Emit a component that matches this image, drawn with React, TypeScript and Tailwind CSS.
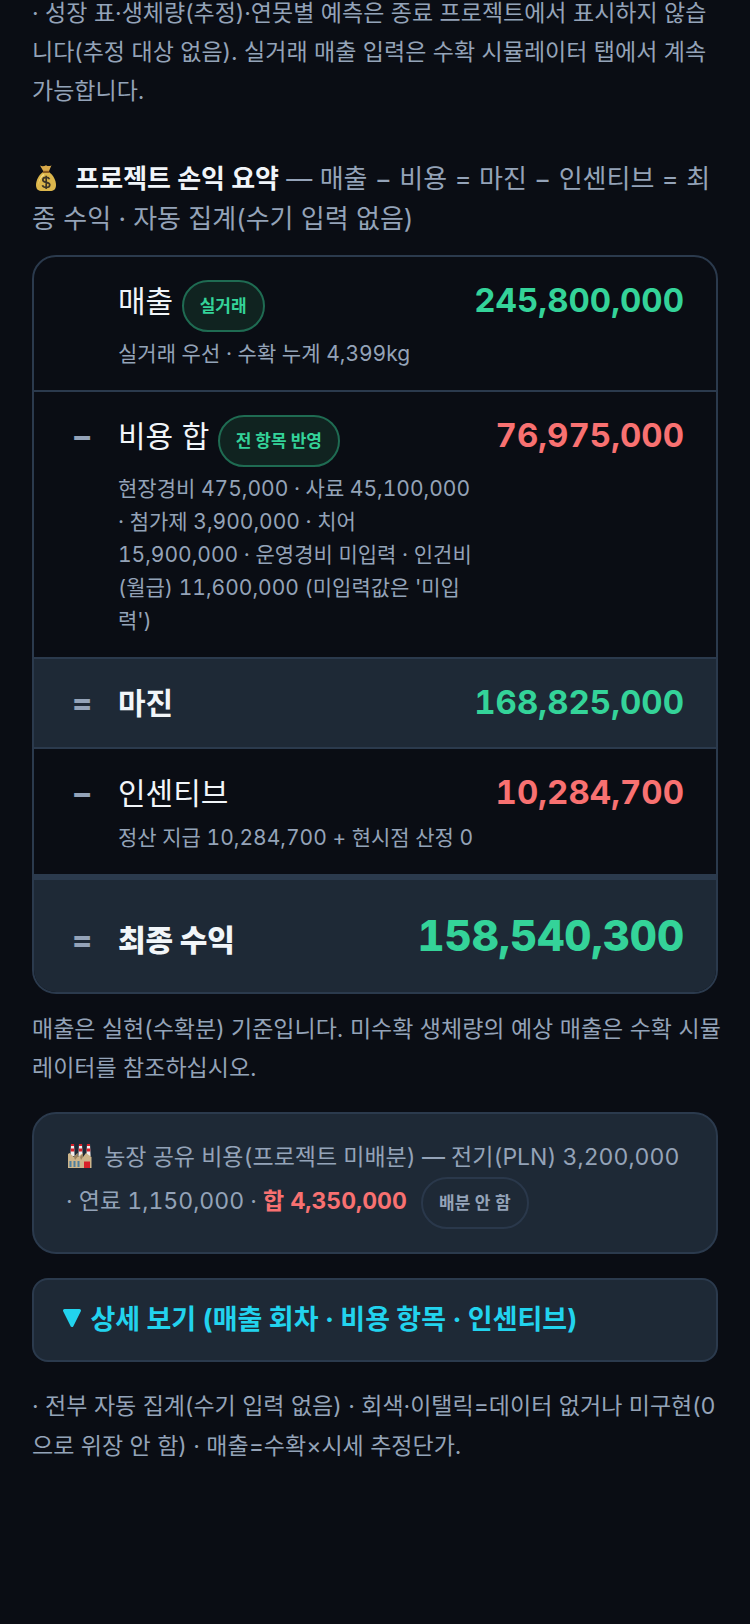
import type { ReactNode } from 'react'
import clsx from 'clsx'

type RowProps = {
  op?: string
  label: string
  badge?: string
  note?: string
  value: string
  tone: 'gain' | 'cost'
  kind?: 'item' | 'subtotal' | 'total'
}

const rows: RowProps[] = [
  {
    label: '매출',
    badge: '실거래',
    note: '실거래 우선 · 수확 누계 4,399kg',
    value: '245,800,000',
    tone: 'gain'
  },
  {
    op: '−',
    label: '비용 합',
    badge: '전 항목 반영',
    note: "현장경비 475,000 · 사료 45,100,000 · 첨가제 3,900,000 · 치어 15,900,000 · 운영경비 미입력 · 인건비(월급) 11,600,000 (미입력값은 '미입력')",
    value: '76,975,000',
    tone: 'cost'
  },
  { op: '=', label: '마진', value: '168,825,000', tone: 'gain', kind: 'subtotal' },
  {
    op: '−',
    label: '인센티브',
    note: '정산 지급 10,284,700 + 현시점 산정 0',
    value: '10,284,700',
    tone: 'cost'
  },
  { op: '=', label: '최종 수익', value: '158,540,300', tone: 'gain', kind: 'total' }
]

const MoneyBag = () => (
  <svg viewBox="0 0 28 28" className="mr-2 inline-block size-7 align-[-4px]" aria-hidden="true">
    <path d="M8 1.5 Q11 3 14 1.2 Q17 3 19.5 1.2 L16.8 7.5 H11.5 Z" fill="#d9a94a" />
    <path d="M11 8 C7 11 4 16 4 21 C4 25.5 6.5 27 10 27 H18 C21.5 27 24 25.5 24 21 C24 16 21 11 17 8 Z" fill="#dcb64c" />
    <path d="M11.2 10 C8 13 6.2 17 6.5 21 C7 16.5 9 13 12.5 11 Z" fill="#f6e08a" />
    <path d="M11 6.8 H17.2 V9 H11 Z" fill="#8a5a20" />
    <path
      d="M17.5 15.2 C17 13.9 15.7 13.4 14.2 13.4 C12.2 13.4 10.8 14.4 10.8 16 C10.8 19.3 17.8 17.5 17.8 20.8 C17.8 22.6 16.2 23.5 14.2 23.5 C12.3 23.5 10.9 22.8 10.4 21.3 M14.2 11.8 V25"
      fill="none"
      stroke="#3d3526"
      strokeWidth="1.7"
    />
  </svg>
)

const Factory = () => (
  <svg viewBox="0 0 28 28" className="mr-1 inline-block size-7 align-[-6px]" aria-hidden="true">
    <path d="M5 1 H8 L8.6 13 H4.4 Z M13 1 H16 L16.6 13 H12.4 Z M21 1 H24 L24.6 13 H20.4 Z" fill="#f1eeee" />
    <path d="M5 1 H8 V3 H5 Z M4.8 5.5 H8.2 V8.5 H4.8 Z M13 1 H16 V3 H13 Z M12.8 5.5 H16.2 V8.5 H12.8 Z M21 1 H24 V3 H21 Z M20.8 5.5 H24.2 V8.5 H20.8 Z" fill="#d9202a" />
    <path d="M2 11 L3.5 10 L8 14 L11.5 10 V14 L17 10 V14 L20 10 L25.5 14 V25 H2 Z" fill="#cdb58b" />
    <path d="M8 14 L11.5 10 V14 L9 17 Z M14 14 L17 10 V14 L15 17 Z" fill="#9c8460" />
    <path d="M3.5 18 H5.5 V24 H3.5 Z M7.5 18 H9.5 V24 H7.5 Z M11.5 18 H13.5 V24 H11.5 Z" fill="#4d7fa0" />
    <path d="M18 18.5 H24 V25 H18 Z" fill="#d9202a" />
  </svg>
)

const Badge = ({ children, muted }: { children: ReactNode; muted?: boolean }) => (
  <span
    className={clsx(
      'inline-block rounded-full border-2 px-4 py-2.5 text-[17px] leading-7 font-bold',
      muted ? 'border-[#2a384b] text-[#94a3b8]' : 'my-px border-[#1f6b52] bg-[#102320] text-[#34d399]'
    )}
  >
    {children}
  </span>
)

const SummaryRow = ({ op, label, badge, note, value, tone, kind = 'item' }: RowProps) => (
  <div
    className={clsx(
      'flex items-baseline gap-5 border-[#2b3a4d] px-8 first:border-t-0',
      kind === 'total' ? 'border-t-6 py-6' : 'border-t-2 py-5',
      kind !== 'item' && 'bg-[#1e2936]'
    )}
  >
    <span className="w-8 shrink-0 text-center text-[32px] leading-11 font-bold">{op}</span>
    <div className="min-w-0 flex-1">
      <div
        className={clsx(
          'text-[30px] leading-12 text-[#f1f5f9]',
          kind === 'subtotal' && 'font-bold',
          kind === 'total' && 'font-extrabold'
        )}
      >
        {label}
        {badge && (
          <>
            {' '}
            <Badge>{badge}</Badge>
          </>
        )}
      </div>
      {note && <p className="mt-1 text-[21px] leading-[33px] tabular-nums">{note}</p>}
    </div>
    <span
      className={clsx(
        'shrink-0 tabular-nums',
        kind === 'total' ? 'text-[42px] leading-16 font-extrabold' : 'text-[33px] leading-11 font-bold',
        tone === 'gain' ? 'text-[#34d399]' : 'text-[#f87171]'
      )}
    >
      {value}
    </span>
  </div>
)

export default function App() {
  return (
    <main className="flow-root min-h-screen bg-[#0a0d14] px-8 pb-40 font-['Inter','Noto_Sans_CJK_KR',sans-serif] text-[#94a3b8]">
      <p className="-mt-1.5 text-[23px] leading-[39px]">
        · 성장 표·생체량(추정)·연못별 예측은 종료 프로젝트에서 표시하지 않습니다(추정 대상 없음). 실거래 매출
        입력은 수확 시뮬레이터 탭에서 계속 가능합니다.
      </p>

      {/* Profit and loss summary */}
      <h2 className="mt-12 text-[26px] leading-10">
        <MoneyBag /> <strong className="text-[#f1f5f9]">프로젝트 손익 요약</strong> — 매출 − 비용 = 마진 − 인센티브
        = 최종 수익 · 자동 집계(수기 입력 없음)
      </h2>
      <section className="mt-4 overflow-hidden rounded-3xl border-2 border-[#2b3a4d]">
        {rows.map((row) => (
          <SummaryRow key={row.label} {...row} />
        ))}
      </section>
      <p className="mt-4 -mr-1 text-[23px] leading-[39px]">
        매출은 실현(수확분) 기준입니다. 미수확 생체량의 예상 매출은 수확 시뮬레이터를 참조하십시오.
      </p>

      {/* Shared farm costs */}
      <section className="mt-6 rounded-3xl border-2 border-[#2b3a4d] bg-[#1e2936] px-8 py-[23px] text-[23px] leading-10 tabular-nums">
        <Factory /> 농장 공유 비용(프로젝트 미배분) — 전기(PLN) 3,200,000 · 연료 1,150,000 ·{' '}
        <strong className="text-[#f87171]">합 4,350,000</strong>{' '}
        <span className="ml-2">
          <Badge muted>배분 안 함</Badge>
        </span>
      </section>

      <button
        type="button"
        className="mt-6 w-full rounded-2xl border-2 border-[#2b3a4d] bg-[#1e2936] px-7 py-5 text-left text-[27px] leading-10 font-bold text-[#22d3ee]"
      >
        <svg viewBox="0 0 20 20" className="mr-0.5 inline-block size-5 align-[1px]" aria-hidden="true">
          <path
            d="M2.5 2.5 H17.5 L10 17.5 Z"
            fill="currentColor"
            stroke="currentColor"
            strokeWidth="3"
            strokeLinejoin="round"
          />
        </svg>{' '}
        상세 보기 (매출 회차 · 비용 항목 · 인센티브)
      </button>

      <p className="mt-6 text-[23px] leading-10">
        · 전부 자동 집계(수기 입력 없음) · 회색·이탤릭=데이터 없거나 미구현(0으로 위장 안 함) · 매출=수확×시세
        추정단가.
      </p>
    </main>
  )
}
